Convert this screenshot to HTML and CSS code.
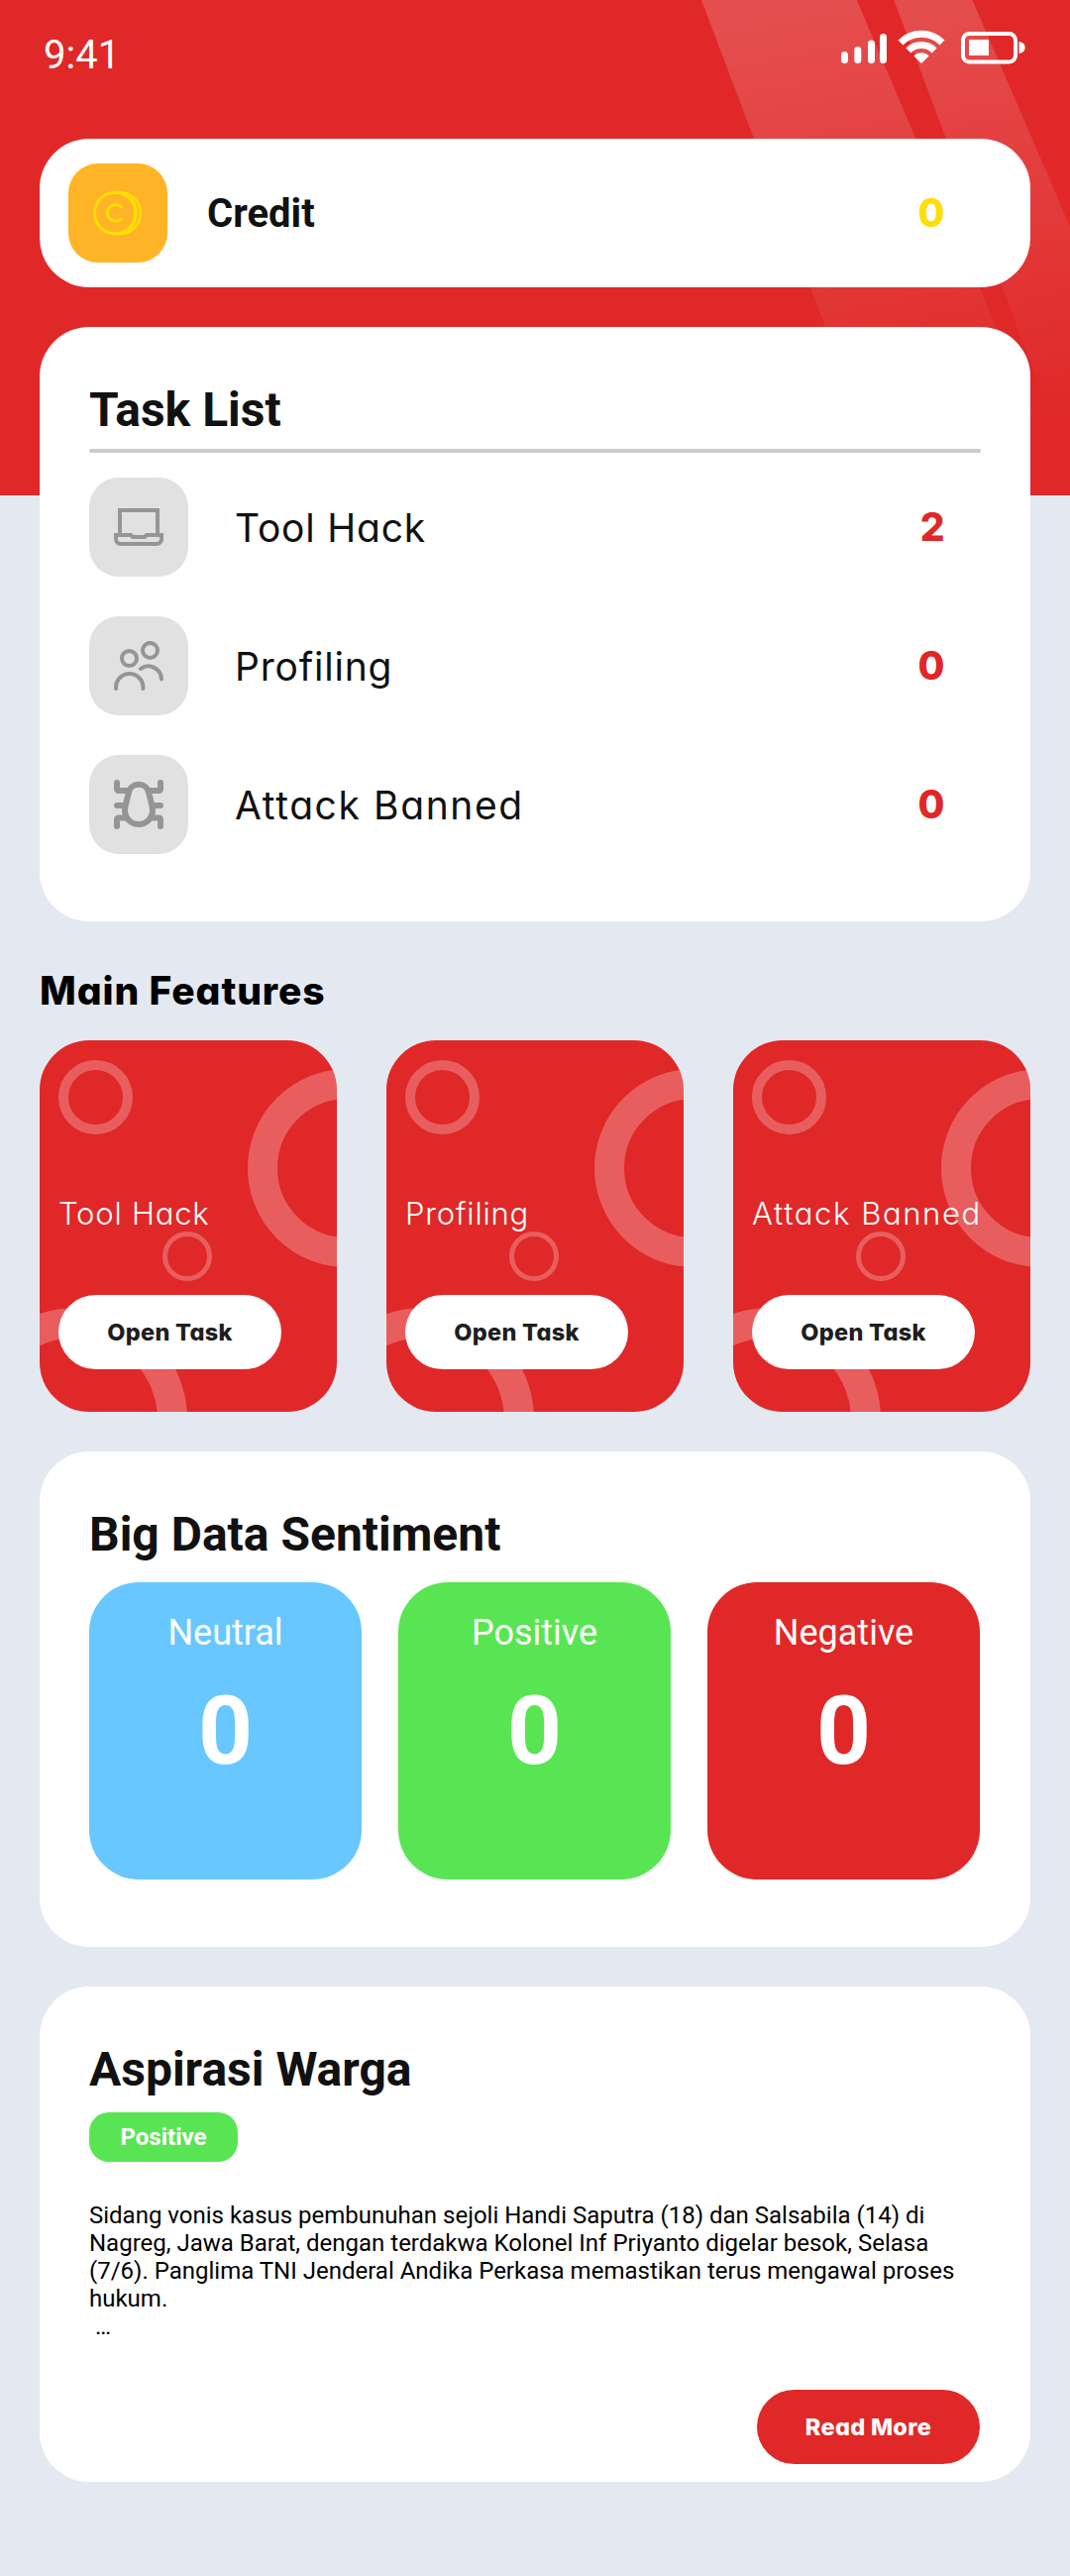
FILE: index.html
```html
<!DOCTYPE html>
<html lang="id">
<head>
<meta charset="utf-8">
<title>Dashboard</title>
<link rel="stylesheet" href="styles.css">
</head>
<body>
<div class="screen">
  <svg class="backdrop" viewBox="0 0 1080 500" aria-hidden="true">
    <defs>
      <linearGradient id="fade" gradientUnits="userSpaceOnUse" x1="850" y1="0" x2="930" y2="450">
        <stop offset="0" stop-color="#fff" stop-opacity=".18"/>
        <stop offset="1" stop-color="#fff" stop-opacity="0"/>
      </linearGradient>
    </defs>
    <rect width="1080" height="500" fill="#e02828"/>
    <path fill="url(#fade)" d="M708 0H864.7L1078 500H897.5Z"/>
    <path fill="url(#fade)" d="M902.3 0H981.4L1197 500H1090.5Z"/>
  </svg>

  <header class="status">
    <span class="time">9:41</span>
    <svg class="status-icons" width="188" height="36" viewBox="848 30 188 36" fill="#fff" aria-hidden="true">
      <rect x="849" y="52" width="7" height="12" rx="3.5"/>
      <rect x="862.3" y="47" width="7" height="17" rx="3.5"/>
      <rect x="876" y="40.5" width="7" height="23.5" rx="3.5"/>
      <rect x="888" y="34" width="7" height="30" rx="3.5"/>
      <path d="M909 43A29.7 29.7 0 0 1 951 43M916.9 50.9A18.6 18.6 0 0 1 943.1 50.9" fill="none" stroke="#fff" stroke-width="7.1"/>
      <path d="M930 64L922.4 56.4A10.7 10.7 0 0 1 937.6 56.4Z"/>
      <rect x="972" y="34" width="53" height="28.5" rx="6.5" fill="none" stroke="#fff" stroke-width="4"/>
      <rect x="978" y="40" width="20" height="16"/>
      <path d="M1028.5 42Q1034.7 43 1034.7 48T1028.5 54Z"/>
    </svg>
  </header>

  <main class="content">
    <section class="card credit">
      <div class="tile tile-gold">
        <svg width="50" height="50" viewBox="0 0 50 50" fill="none" stroke="#ffde05" stroke-width="3" stroke-linecap="round">
          <circle cx="22.3" cy="25" r="20.8"/>
          <path d="M22.3 4.2H27A20.8 20.8 0 0 1 27 45.8H22.3M31 6.5Q43 12 43 25T31 43.5" stroke-width="2.8"/>
          <path d="M28.6 18.9A8.4 8.4 0 1 0 28.6 30.9"/>
        </svg>
      </div>
      <span class="credit-name">Credit</span>
      <span class="count count-gold">0</span>
    </section>

    <section class="card tasks">
      <h2 class="title">Task List</h2>
      <div class="rule"></div>
      <div class="task-list">
        <div class="task">
          <div class="tile">
            <svg width="50" height="50" viewBox="0 0 50 50" fill="none" stroke="#959595" stroke-width="4">
              <path d="M6 33V8H44V33"/>
              <path d="M2 33H17L19 35H31L33 33H48V37A5 5 0 0 1 43 42H7A5 5 0 0 1 2 37Z"/>
            </svg>
          </div>
          <span class="task-name">Tool Hack</span>
          <span class="count">2</span>
        </div>
        <div class="task">
          <div class="tile">
            <svg width="50" height="50" viewBox="0 0 50 50" fill="none" stroke="#959595" stroke-width="4" stroke-linecap="round">
              <circle cx="15.5" cy="17.5" r="7.5"/>
              <circle cx="36.5" cy="9.4" r="7.5"/>
              <path d="M2 48V46.7A13.7 13.7 0 0 1 29.4 46.7V48"/>
              <path d="M27 28A13.2 13.2 0 0 1 48 38.5"/>
            </svg>
          </div>
          <span class="task-name">Profiling</span>
          <span class="count">0</span>
        </div>
        <div class="task">
          <div class="tile">
            <svg width="50" height="50" viewBox="0 0 50 50" fill="none" stroke="#959595" stroke-width="6" stroke-linecap="round" stroke-linejoin="round">
              <path d="M25 4.8C30.5 4.8 34 8 35 12.5L38 24.5C38.6 26.8 39 29 39 31A14 14 0 0 1 11 31C11 29 11.4 26.8 12 24.5L15 12.5C16 8 19.5 4.8 25 4.8Z"/>
              <path d="M3 3V9Q3 11 5 11H14M47 3V9Q47 11 45 11H36M3 26H11M47 26H39M3 47V40.5Q3 38.5 5 38.5H13M47 47V40.5Q47 38.5 45 38.5H37"/>
            </svg>
          </div>
          <span class="task-name wide">Attack Banned</span>
          <span class="count">0</span>
        </div>
      </div>
    </section>

    <h2 class="section-title">Main Features</h2>
    <section class="features">
      <article class="feature">
        <i class="ring ring-top"></i><i class="ring ring-side"></i><i class="ring ring-dot"></i><i class="ring ring-base"></i>
        <h3 class="feature-name">Tool Hack</h3>
        <button class="pill">Open Task</button>
      </article>
      <article class="feature">
        <i class="ring ring-top"></i><i class="ring ring-side"></i><i class="ring ring-dot"></i><i class="ring ring-base"></i>
        <h3 class="feature-name">Profiling</h3>
        <button class="pill">Open Task</button>
      </article>
      <article class="feature">
        <i class="ring ring-top"></i><i class="ring ring-side"></i><i class="ring ring-dot"></i><i class="ring ring-base"></i>
        <h3 class="feature-name wide">Attack Banned</h3>
        <button class="pill">Open Task</button>
      </article>
    </section>

    <section class="card panel">
      <h2 class="title">Big Data Sentiment</h2>
      <div class="sentiments">
        <div class="sentiment neutral"><span class="sentiment-name">Neutral</span><strong class="sentiment-value">0</strong></div>
        <div class="sentiment positive"><span class="sentiment-name">Positive</span><strong class="sentiment-value">0</strong></div>
        <div class="sentiment negative"><span class="sentiment-name">Negative</span><strong class="sentiment-value">0</strong></div>
      </div>
    </section>

    <section class="card panel">
      <h2 class="title">Aspirasi Warga</h2>
      <span class="badge">Positive</span>
      <p class="story">Sidang vonis kasus pembunuhan sejoli Handi Saputra (18) dan Salsabila (14) di<br>Nagreg, Jawa Barat, dengan terdakwa Kolonel Inf Priyanto digelar besok, Selasa<br>(7/6). Panglima TNI Jenderal Andika Perkasa memastikan terus mengawal proses<br>hukum.<br>&nbsp;…</p>
      <button class="pill pill-red">Read More</button>
    </section>
  </main>
</div>
</body>
</html>
```
FILE: styles.css
```css
* { box-sizing: border-box; margin: 0; padding: 0; }

body {
  width: 1080px;
  min-height: 2600px;
  background: #e4e9f1;
  color: #111;
  font-family: Roboto, "Liberation Sans", sans-serif;
}

.screen { position: relative; min-height: 2600px; }
.backdrop { position: absolute; top: 0; left: 0; width: 1080px; height: 500px; }

.status {
  position: relative;
  display: flex;
  justify-content: space-between;
  align-items: flex-start;
  height: 140px;
  padding: 30px 44px 0 44px;
}
.time { color: #fff; font-size: 40px; line-height: 52px; }

.content { position: relative; padding: 0 40px; }

.card { background: #fff; border-radius: 50px; }

.credit {
  display: flex;
  align-items: center;
  height: 150px;
  padding: 0 87px 0 29px;
  margin-bottom: 40px;
}
.credit-name { margin-left: 40px; font-size: 40px; font-weight: 700; }

.tile {
  display: flex;
  align-items: center;
  justify-content: center;
  width: 100px;
  height: 100px;
  border-radius: 30px;
  background: #e1e1e1;
}
.tile-gold { background: #ffb327; }

.count, .task-name, .section-title, .feature-name, .pill {
  font-family: Inter, "Liberation Sans", sans-serif;
  font-feature-settings: "cv11";
}
.count {
  margin-left: auto;
  padding-bottom: 2px;
  font-size: 39px;
  font-weight: 800;
  letter-spacing: -.5px;
  color: #e02828;
}
.count-gold { color: #ffde05; }

.tasks { height: 600px; padding: 56px 50px 0; }
.title { font-size: 48px; line-height: 56px; font-weight: 700; }
.rule { height: 4px; margin-top: 11px; border-radius: 2px; background: #ccc; }
.task-list { display: flex; flex-direction: column; gap: 40px; margin-top: 25px; }
.task { display: flex; align-items: center; padding-right: 37px; }
.task-name { margin-left: 47px; font-size: 39px; letter-spacing: .8px; }
.task-name.wide { letter-spacing: 1.6px; }

.section-title {
  margin: 50px 0 30px;
  font-size: 39px;
  line-height: 40px;
  font-weight: 800;
  letter-spacing: .9px;
  color: #000;
}

.features { display: grid; grid-template-columns: repeat(3, 300px); gap: 50px; }
.feature {
  position: relative;
  height: 375px;
  padding: 155px 0 0 19px;
  border-radius: 50px;
  overflow: hidden;
  background: #e02828;
}
.feature-name {
  position: relative;
  font-size: 31px;
  line-height: 40px;
  font-weight: 350;
  letter-spacing: .8px;
  color: #fff;
  white-space: nowrap;
}
.feature-name.wide { letter-spacing: 1.6px; }

.ring { position: absolute; border: 10px solid rgba(255, 255, 255, .25); border-radius: 50%; }
.ring-top { left: 19px; top: 20px; width: 75px; height: 75px; }
.ring-side { left: 210px; top: 29px; width: 200px; height: 200px; border-width: 30px; }
.ring-dot { left: 124px; top: 193px; width: 50px; height: 50px; border-width: 5px; }
.ring-base { left: -76px; top: 270px; width: 225px; height: 225px; border-width: 30px; }

.pill {
  position: relative;
  display: block;
  width: 225px;
  height: 75px;
  border: 0;
  border-radius: 37.5px;
  background: #fff;
  color: #1e1e1e;
  font-size: 23.5px;
  font-weight: 800;
  letter-spacing: .3px;
}
.feature .pill { margin-top: 62px; }
.pill-red { margin: 50px 1px 0 auto; background: #e02828; color: #fff; }

.panel { height: 500px; margin-top: 40px; padding: 56px 50px 0; }

.sentiments { display: grid; grid-template-columns: repeat(3, 275px); gap: 37px; margin-top: 20px; }
.sentiment {
  height: 300px;
  padding-top: 30px;
  border-radius: 50px;
  color: #fff;
  text-align: center;
}
.sentiment-name { display: block; font-size: 36px; line-height: 42px; }
.sentiment-value { display: block; margin-top: 22px; font-size: 96px; line-height: 112px; font-weight: 700; }
.neutral { background: #68c7ff; }
.positive { background: #59e553; }
.negative { background: #e02828; }

.badge {
  display: flex;
  align-items: center;
  justify-content: center;
  width: 150px;
  height: 50px;
  margin-top: 15px;
  border-radius: 20px;
  background: #59e553;
  color: #fff;
  font-size: 24px;
  font-weight: 700;
}
.story { margin-top: 40px; font-size: 24px; line-height: 28px; color: #000; }
```
